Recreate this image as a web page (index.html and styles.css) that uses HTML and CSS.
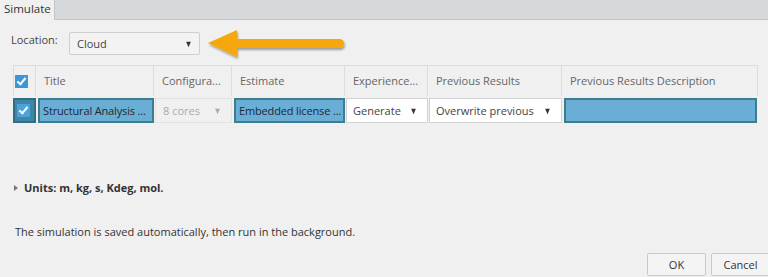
FILE: index.html
```html
<!DOCTYPE html>
<html>
<head>
<meta charset="utf-8">
<link rel="stylesheet" href="styles.css">
</head>
<body>
<div class="window">
  <div class="tabbar">
    <div class="tab">Simulate</div>
  </div>
  <div class="content">
    <div class="location-row">
      <span class="loc-label">Location:</span>
      <div class="select loc-select"><span>Cloud</span><span class="caret">▼</span></div>
      <svg class="callout" width="146" height="34" viewBox="0 0 146 34">
        <defs>
          <filter id="sh" x="-10%" y="-30%" width="130%" height="170%">
            <feDropShadow dx="1" dy="2" stdDeviation="1.2" flood-color="#000" flood-opacity="0.35"/>
          </filter>
        </defs>
        <g filter="url(#sh)" fill="#f6a70c">
          <polygon points="2,14 31,1 31,28"/>
          <rect x="28" y="10" width="110" height="9" rx="4.5"/>
        </g>
      </svg>
    </div>

    <div class="grid">
      <div class="hcell hcheck"><span class="cb"></span></div>
      <div class="hcell">Title</div>
      <div class="hcell">Configura...</div>
      <div class="hcell">Estimate</div>
      <div class="hcell">Experience...</div>
      <div class="hcell">Previous Results</div>
      <div class="hcell">Previous Results Description</div>

      <div class="rcell rcheck"><span class="cb"></span></div>
      <div class="rcell sel">Structural Analysis ...</div>
      <div class="rcell dis"><span>8 cores</span><span class="caret">▼</span></div>
      <div class="rcell sel">Embedded license ...</div>
      <div class="rcell drop"><span>Generate</span><span class="caret">▼</span></div>
      <div class="rcell drop"><span>Overwrite previous</span><span class="caret">▼</span></div>
      <div class="rcell sel"></div>
    </div>

    <div class="units"><span class="tri"></span>Units: m, kg, s, Kdeg, mol.</div>
    <div class="note">The simulation is saved automatically, then run in the background.</div>
  </div>
  <div class="footer">
    <button class="btn">OK</button>
    <button class="btn">Cancel</button>
  </div>
</div>
</body>
</html>
```

FILE: styles.css
```css
* { box-sizing: border-box; }
html, body {
  margin: 0;
  padding: 0;
  background: #f0f0f0;
  overflow: hidden;
}
body {
  font-family: "Open Sans", "Noto Sans", sans-serif;
  font-size: 11px;
  color: #333;
}
.window {
  width: 768px;
  height: 277px;
  display: flex;
  flex-direction: column;
}
.tabbar {
  height: 20px;
  background: #d6d9db;
  border-bottom: 1px solid #c3c6c8;
  display: flex;
}
.tab {
  width: 55px;
  height: 20px;
  background: #f0f0f0;
  border-right: 1px solid #c3c6c8;
  padding-left: 4px;
  line-height: 18px;
  font-size: 11.5px;
  color: #333;
}
.content {
  padding-left: 11px;
}
.location-row {
  position: relative;
  display: flex;
  align-items: flex-start;
  margin-top: 12px;
  height: 23px;
}
.loc-label {
  width: 58px;
  line-height: 16px;
  color: #444;
}
.select {
  display: flex;
  align-items: center;
  justify-content: space-between;
  background: #f3f3f3;
  border: 1px solid #cfcfcf;
  border-radius: 2px;
}
.loc-select {
  width: 131px;
  height: 23px;
  padding: 0 6px 0 7px;
  color: #444;
}
.caret {
  font-size: 9px;
  color: #333;
  transform: scaleX(0.9);
}
.callout {
  position: absolute;
  left: 195px;
  top: -3px;
}
.grid {
  margin-top: 10px;
  margin-left: 2px;
  display: grid;
  grid-template-columns: 23px 118px 78px 113px 83px 134px 196px;
  grid-template-rows: 31px 26px;
}
.hcell {
  border-right: 1px solid #dcdcdc;
  border-top: 1px solid #dcdcdc;
  padding-left: 8px;
  line-height: 29px;
  color: #666;
  white-space: nowrap;
  overflow: hidden;
}
.hcell:first-child { border-left: 1px solid #dcdcdc; }
.hcheck {
  padding-left: 1px;
  display: flex;
  align-items: center;
}
.cb {
  display: inline-block;
  width: 13px;
  height: 13px;
  background: #3c97d8;
  position: relative;
}
.cb::after {
  content: "";
  position: absolute;
  left: 4px;
  top: 1px;
  width: 3px;
  height: 7px;
  border-right: 2px solid #fff;
  border-bottom: 2px solid #fff;
  transform: rotate(40deg);
}
.rcell {
  margin-top: 2px;
  height: 25px;
  white-space: nowrap;
  overflow: hidden;
  display: flex;
  align-items: center;
  padding-left: 4px;
}
.rcheck {
  background: #3f86a6;
  padding-left: 2px;
  border: 2px solid #2f6f86;
}
.rcheck .cb { background: #4aa3de; }
.sel {
  margin-left: 2px;
  padding-left: 3px;
  background: #6aaed6;
  border: 2px solid #3b7e92;
  color: #1c2a33;
  letter-spacing: -0.15px;
}
.rcell.sel:last-child { margin-left: 2px; margin-right: 1px; }
.dis {
  color: #aaa;
  justify-content: space-between;
  padding-left: 7px;
  padding-right: 9px;
  border: 1px solid #e2e2e2;
  margin-left: 1px;
}
.dis .caret { color: #aaa; }
.drop {
  background: #fff;
  border: 1px solid #d3d3d3;
  justify-content: space-between;
  padding-left: 6px;
  padding-right: 9px;
  margin-left: 1px;
  color: #444;
}
.units {
  margin-top: 58px;
  margin-left: 3px;
  font-weight: bold;
  color: #333;
  display: flex;
  align-items: center;
  line-height: 16px;
}
.tri {
  width: 0;
  height: 0;
  border-left: 4px solid #777;
  border-top: 3px solid transparent;
  border-bottom: 3px solid transparent;
  margin-right: 6px;
}
.note {
  margin-top: 28px;
  margin-left: 4px;
  line-height: 16px;
  color: #333;
}
.footer {
  margin-top: auto;
  display: flex;
  gap: 5px;
  padding-left: 647px;
  height: 24px;
}
.btn {
  flex: none;
  width: 59px;
  height: 23px;
  background: #f4f4f4;
  border: 1px solid #c9c9c9;
  border-radius: 2px;
  font-family: inherit;
  font-size: 11px;
  color: #333;
  padding: 0;
}
```
